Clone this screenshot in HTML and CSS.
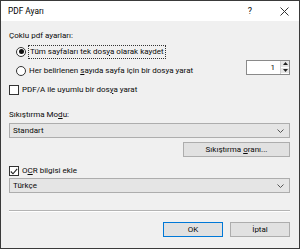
FILE: index.html
```html
<!DOCTYPE html>
<html lang="tr">
<head>
<meta charset="utf-8">
<title>PDF Ayarı</title>
<link rel="stylesheet" href="styles.css">
</head>
<body>
<div class="window">
  <div class="titlebar">
    <span class="title">PDF Ayarı</span>
    <span class="help">?</span>
    <span class="close"><svg width="9" height="9" viewBox="0 0 9 9"><path d="M0.5 0.5L8.5 8.5M8.5 0.5L0.5 8.5" stroke="#333" stroke-width="1" fill="none"/></svg></span>
  </div>
  <div class="body">
    <div class="label group-label">Çoklu pdf ayarları:</div>
    <div class="row radio-row first">
      <span class="radio checked"></span>
      <span class="text focus">Tüm sayfaları tek dos<u>y</u>a olarak kaydet</span>
    </div>
    <div class="row radio-row second">
      <span class="radio"></span>
      <span class="text">Her belirlenen <u>s</u>ayıda sayfa için bir dosya yarat</span>
      <span class="spin">
        <span class="spin-field">1</span>
        <span class="spin-buttons">
          <span class="spin-btn"><svg width="5" height="3" viewBox="0 0 5 3"><path d="M0 3L2.5 0L5 3Z" fill="#222"/></svg></span>
          <span class="spin-btn"><svg width="5" height="3" viewBox="0 0 5 3"><path d="M0 0L2.5 3L5 0Z" fill="#222"/></svg></span>
        </span>
      </span>
    </div>
    <div class="row check-row pdfa">
      <span class="checkbox"></span>
      <span class="text">PDF/A ile uyumlu bir dos<u>y</u>a yarat</span>
    </div>
    <div class="label mode-label">Sıkıştırma Mo<u>d</u>u:</div>
    <div class="combo">
      <span class="combo-text">Standart</span>
      <svg class="chev" width="7" height="4" viewBox="0 0 7 4"><path d="M0.5 0.5L3.5 3.5L6.5 0.5" stroke="#555" stroke-width="1" fill="none"/></svg>
    </div>
    <div class="btn-line">
      <span class="button ratio"><span>Sıkıştırma <u>o</u>ranı...</span></span>
    </div>
    <div class="row check-row ocr">
      <span class="checkbox checked"><svg width="8" height="7" viewBox="0 0 8 7"><path d="M0.8 3.5L3 5.8L7.2 0.8" stroke="#222" stroke-width="1.1" fill="none"/></svg></span>
      <span class="text">O<u>C</u>R bilgisi ekle</span>
    </div>
    <div class="combo lang">
      <span class="combo-text">Türkçe</span>
      <svg class="chev" width="7" height="4" viewBox="0 0 7 4"><path d="M0.5 0.5L3.5 3.5L6.5 0.5" stroke="#555" stroke-width="1" fill="none"/></svg>
    </div>
    <div class="separator"></div>
    <div class="actions">
      <span class="button default"><span>OK</span></span>
      <span class="button"><span>İptal</span></span>
    </div>
  </div>
</div>
</body>
</html>
```
FILE: styles.css
```css
* { box-sizing: border-box; }
html, body { margin: 0; padding: 0; }
body {
  width: 300px;
  height: 249px;
  font-family: Roboto, "Noto Sans", sans-serif;
  font-size: 8px;
  color: #0a0a0a;
  overflow: hidden;
}
u { text-decoration: underline; text-underline-offset: 1px; }
.window {
  width: 300px;
  height: 249px;
  border: 1px solid #3a3a3a;
  background: #f0f0f0;
  display: flex;
  flex-direction: column;
}
.titlebar {
  height: 20px;
  background: #fff;
  display: flex;
  align-items: center;
  padding-left: 7px;
  flex-shrink: 0;
}
.title { flex: 1; color: #000; font-size: 8.3px; }
.help { font-size: 9px; width: 30px; text-align: center; margin-right: 4px; }
.close { width: 30px; display: flex; justify-content: center; }
.body {
  flex: 1;
  padding: 0 9px 0 8px;
  display: flex;
  flex-direction: column;
}
.label { line-height: 12px; }
.group-label { margin-top: 9px; }
.row { display: flex; align-items: center; }
.radio-row { padding-left: 7px; height: 19px; }
.radio {
  width: 10px; height: 10px;
  border: 1px solid #333;
  border-radius: 50%;
  background: #fff;
  margin-right: 3px;
  flex-shrink: 0;
  display: flex; align-items: center; justify-content: center;
}
.radio.checked::after {
  content: "";
  width: 5px; height: 5px;
  border-radius: 50%;
  background: #111;
}
.text { line-height: 12px; white-space: nowrap; }
.focus { outline: 1px dotted #333; padding: 0 1px; }
.spin {
  margin-left: auto;
  align-self: flex-start;
  margin-top: -1px;
  width: 44px; height: 15px;
  display: flex;
  border: 1px solid #8a8a8a;
  background: #fff;
}
.spin-field { flex: 1; text-align: right; padding-right: 5px; line-height: 13px; }
.spin-buttons { width: 9px; display: flex; flex-direction: column; border-left: 1px solid #d0d0d0; }
.spin-btn { flex: 1; background: #e6e6e6; display: flex; align-items: center; justify-content: center; border-bottom: 1px solid #fff; }
.check-row { height: 16px; margin-top: 2px; }
.checkbox {
  width: 10px; height: 10px;
  border: 1px solid #333;
  background: #fff;
  margin-right: 3px;
  flex-shrink: 0;
  display: flex; align-items: center; justify-content: center;
}
.mode-label { margin-top: 11px; }
.combo {
  margin-top: 2px;
  height: 15px;
  border: 1px solid #adadad;
  background: #e5e5e5;
  display: flex;
  align-items: center;
  padding: 0 5px 0 3px;
}
.combo-text { flex: 1; }
.chev { flex-shrink: 0; }
.btn-line { display: flex; justify-content: flex-end; margin-top: 4px; }
.button {
  height: 15px;
  border: 1px solid #adadad;
  background: #e1e1e1;
  display: flex; align-items: center; justify-content: center;
  white-space: nowrap;
}
.ratio { width: 107px; }
.check-row.ocr { margin-top: 7px; height: 14px; }
.combo.lang { margin-top: 0; }
.separator { margin-top: 17px; height: 2px; background: #b4b4b4; border-bottom: 1px solid #fff; }
.actions { display: flex; justify-content: flex-end; gap: 7px; margin-top: 10px; }
.actions .button { width: 60px; }
.default { border-color: #0078d7; }
```
